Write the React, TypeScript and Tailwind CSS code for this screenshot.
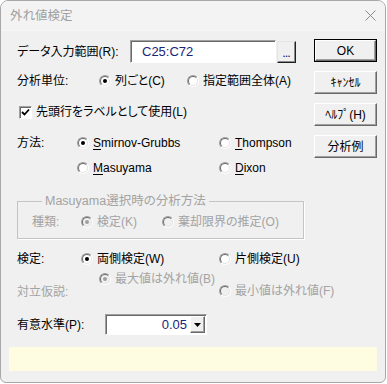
import type { ReactNode } from "react";

const sunken =
  "border border-t-[#a0a0a0] border-l-[#a0a0a0] border-r-white border-b-white shadow-[inset_1px_1px_0_#696969]";
const raised =
  "border border-t-white border-l-white border-r-[#696969] border-b-[#696969] shadow-[inset_-1px_-1px_0_#a0a0a0] bg-[#f0f0f0]";

const Radio = ({ checked, disabled }: { checked?: boolean; disabled?: boolean }) => (
  <span className="w-[12px] h-[12px] shrink-0 rounded-full border border-t-[#a0a0a0] border-l-[#a0a0a0] border-r-white border-b-white flex items-center justify-center">
    <span
      className={`w-[10px] h-[10px] rounded-full border border-t-[#696969] border-l-[#696969] border-r-[#e3e3e3] border-b-[#e3e3e3] flex items-center justify-center ${
        disabled ? "bg-[#f0f0f0]" : "bg-white"
      }`}
    >
      {checked && (
        <span className={`w-[4px] h-[4px] rounded-full ${disabled ? "bg-[#a0a0a0]" : "bg-black"}`} />
      )}
    </span>
  </span>
);

const Option = ({
  children,
  checked,
  disabled,
  className = "",
}: {
  children: ReactNode;
  checked?: boolean;
  disabled?: boolean;
  className?: string;
}) => (
  <div className={`flex items-center gap-[4px] ${disabled ? "text-[#a3a3a3]" : ""} ${className}`}>
    <Radio checked={checked} disabled={disabled} />
    <span className="whitespace-nowrap">{children}</span>
  </div>
);

const Btn = ({ children, def }: { children: ReactNode; def?: boolean }) =>
  def ? (
    <div className="w-[63px] h-[23px] border border-black">
      <div className={`${raised} w-full h-full flex items-center justify-center`}>{children}</div>
    </div>
  ) : (
    <div className={`${raised} w-[63px] h-[23px] flex items-center justify-center`}>{children}</div>
  );

export default function App() {
  return (
    <div className="w-[387px] h-[384px] bg-white font-['Liberation_Sans','Noto_Sans_CJK_JP',sans-serif] text-[12px] leading-[16px] text-black [font-feature-settings:'palt']">
      <div className="w-[386px] h-[383px] border border-[#a8a8a8] rounded-t-[8px] rounded-b-[6px] bg-[#f0f0f0] overflow-hidden flex flex-col">
        {/* Title bar */}
        <div className="h-[30px] shrink-0 bg-[#f3f3f3] flex items-center justify-between pl-[9px] pr-[8px] border-b border-[#f7f7f7]">
          <span className="text-[#a0a0a0] text-[12.5px]">外れ値検定</span>
          <svg width="11" height="11" viewBox="0 0 11 11" className="mr-[1px]">
            <path d="M0.5 0.5L10.5 10.5M10.5 0.5L0.5 10.5" stroke="#8a8a8a" strokeWidth="1" />
          </svg>
        </div>

        {/* Body */}
        <div className="flex-1 px-[8px] pt-[9px]">
          <div className="pl-[8px]">
            <div className="flex">
              {/* Left column */}
              <div className="w-[280px]">
                <div className="flex items-center h-[23px]">
                  <span className="w-[113px] whitespace-nowrap">データ入力範囲(R):</span>
                  <div className={`${sunken} w-[146px] h-[23px] bg-white flex items-center pl-[11px] text-[#1a237a] text-[13px]`}>
                    C25:C72
                  </div>
                  <div className="ml-[1px] w-[19px] h-[22px] border border-t-[#e6e6e6] border-l-[#e6e6e6] border-r-[#202020] border-b-[#202020] shadow-[inset_-1px_-1px_0_#8a8a8a] bg-[#f0f0f0] flex items-end justify-center pb-[3px]">
                    <span className="text-[9px] leading-[9px] text-[#1a237a] font-bold">...</span>
                  </div>
                </div>

                <div className="flex items-center h-[20px] mt-[8px]">
                  <span className="w-[82px]">分析単位:</span>
                  <Option checked className="w-[88px]">列ごと(C)</Option>
                  <Option>指定範囲全体(A)</Option>
                </div>

                <div className="flex items-center h-[20px] mt-[11px] gap-[4px] pl-[2px]">
                  <span className={`${sunken} w-[13px] h-[13px] bg-white flex items-center justify-center`}>
                    <svg width="9" height="9" viewBox="0 0 9 9">
                      <path d="M1 4L3.5 6.5L8 1.5" stroke="black" strokeWidth="1.8" fill="none" />
                    </svg>
                  </span>
                  <span>先頭行をラベルとして使用(L)</span>
                </div>

                <div className="flex items-center h-[20px] mt-[11px]">
                  <span className="w-[60px]">方法:</span>
                  <Option checked className="w-[142px]">
                    <span className="underline underline-offset-2">S</span>mirnov-Grubbs
                  </Option>
                  <Option>
                    <span className="underline underline-offset-2">T</span>hompson
                  </Option>
                </div>

                <div className="flex items-center h-[20px] mt-[5px]">
                  <span className="w-[60px]" />
                  <Option className="w-[142px]">
                    <span className="underline underline-offset-2">M</span>asuyama
                  </Option>
                  <Option>
                    <span className="underline underline-offset-2">D</span>ixon
                  </Option>
                </div>
              </div>

              {/* Buttons */}
              <div className="ml-[17px] flex flex-col gap-[9px] -mt-[1px]">
                <Btn def>OK</Btn>
                <Btn>ｷｬﾝｾﾙ</Btn>
                <Btn>ﾍﾙﾌﾟ(H)</Btn>
                <Btn>分析例</Btn>
              </div>
            </div>

            {/* Masuyama group */}
            <fieldset className="mt-[15px] w-[287px] border border-[#c4c4c4] shadow-[1px_1px_0_white] pl-[14px] pt-[3px] pb-[6px] text-[#a3a3a3]">
              <legend className="ml-[10px] px-[3px] text-[12.5px]">Masuyama選択時の分析方法</legend>
              <div className="flex items-center h-[20px]">
                <span className="w-[49px]">種類:</span>
                <Option checked disabled className="w-[81px]">検定(K)</Option>
                <Option disabled>棄却限界の推定(O)</Option>
              </div>
            </fieldset>

            <div className="flex items-center h-[20px] mt-[10px]">
              <span className="w-[64px]">検定:</span>
              <Option checked className="w-[138px]">両側検定(W)</Option>
              <Option>片側検定(U)</Option>
            </div>

            <div className="flex h-[30px]">
              <span className="w-[82px] mt-[14px] h-[18px] flex items-center text-[#a3a3a3]">対立仮説:</span>
              <Option checked disabled className="w-[120px] mt-[1px] h-[18px]">最大値は外れ値(B)</Option>
              <Option disabled className="mt-[13px] h-[18px]">最小値は外れ値(F)</Option>
            </div>

            <div className="flex items-center h-[21px] mt-[15px]">
              <span className="w-[88px]">有意水準(P):</span>
              <div className={`${sunken} w-[102px] h-[21px] bg-white flex items-center justify-end pr-[1px]`}>
                <span className="text-[#1a237a] text-[13px] pr-[3px]">0.05</span>
                <div className={`${raised} w-[15px] h-[17px] flex items-center justify-center`}>
                  <svg width="7" height="4" viewBox="0 0 7 4">
                    <path d="M0 0H7L3.5 4Z" fill="black" />
                  </svg>
                </div>
              </div>
            </div>
          </div>

          {/* Status bar */}
          <div className="mt-[12px] w-[368px] h-[24px] bg-[#fffde1]" />
        </div>
      </div>
    </div>
  );
}
